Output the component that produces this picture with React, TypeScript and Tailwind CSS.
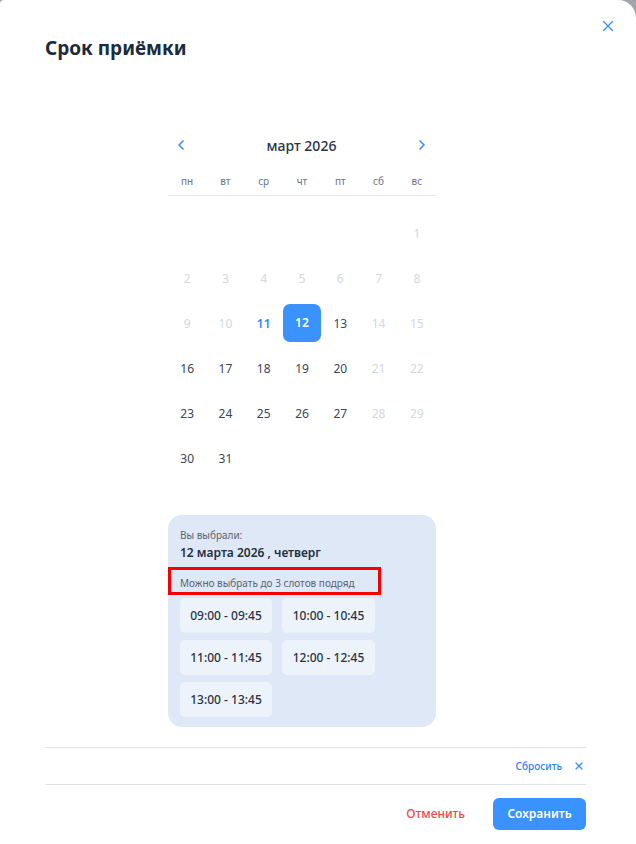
import React from 'react';
import { ChevronLeft, ChevronRight, X } from 'lucide-react';

const font = { fontFamily: '"Noto Sans", "Open Sans", sans-serif' };

const weekdays = ['пн', 'вт', 'ср', 'чт', 'пт', 'сб', 'вс'];

type Day = { n: number; state: 'off' | 'on' | 'today' | 'selected' } | null;

// march 2026 starts on sunday
const days: Day[] = [
  null, null, null, null, null, null, { n: 1, state: 'off' },
  { n: 2, state: 'off' }, { n: 3, state: 'off' }, { n: 4, state: 'off' }, { n: 5, state: 'off' }, { n: 6, state: 'off' }, { n: 7, state: 'off' }, { n: 8, state: 'off' },
  { n: 9, state: 'off' }, { n: 10, state: 'off' }, { n: 11, state: 'today' }, { n: 12, state: 'selected' }, { n: 13, state: 'on' }, { n: 14, state: 'off' }, { n: 15, state: 'off' },
  { n: 16, state: 'on' }, { n: 17, state: 'on' }, { n: 18, state: 'on' }, { n: 19, state: 'on' }, { n: 20, state: 'on' }, { n: 21, state: 'off' }, { n: 22, state: 'off' },
  { n: 23, state: 'on' }, { n: 24, state: 'on' }, { n: 25, state: 'on' }, { n: 26, state: 'on' }, { n: 27, state: 'on' }, { n: 28, state: 'off' }, { n: 29, state: 'off' },
  { n: 30, state: 'on' }, { n: 31, state: 'on' }, null, null, null, null, null,
];

const slots = ['09:00 - 09:45', '10:00 - 10:45', '11:00 - 11:45', '12:00 - 12:45', '13:00 - 13:45'];

function DayCell({ day }: { day: Day }) {
  if (!day) return <div className="h-[45px]" />;
  let cls = 'text-[#3a4556]';
  if (day.state === 'off') cls = 'text-[#d4d8de]';
  if (day.state === 'today') cls = 'text-[#2f86f6] font-semibold';
  return (
    <div className="h-[45px] flex items-center justify-center">
      {day.state === 'selected' ? (
        <div className="w-[38px] h-[38px] -mt-[2px] rounded-[7px] bg-[#3a92fd] text-white font-semibold flex items-center justify-center">
          {day.n}
        </div>
      ) : (
        <span className={cls}>{day.n}</span>
      )}
    </div>
  );
}

export default function App() {
  return (
    <div className="w-[636px] h-[844px] bg-[#a0a4ab] overflow-hidden" style={font}>
      <div className="w-full h-full bg-white rounded-tl-[4px] rounded-tr-[18px] flex flex-col pl-[45px] pr-[50px]">
        <div className="relative pt-[36px]">
          <h1 className="text-[19px] font-bold text-[#1c2a3d] leading-[24px]">Срок приёмки</h1>
          <button className="absolute right-[-31px] top-[17px] text-[#3a8ff7]">
            <X size={18} strokeWidth={1.8} />
          </button>
        </div>

        <div className="w-[268px] ml-[123px] mt-[72px]">
          <div className="flex items-center justify-between h-[26px]">
            <ChevronLeft size={16} strokeWidth={2.5} className="text-[#3a8ff7] ml-[5px]" />
            <span className="text-[14px] font-medium text-[#2a3444]">март 2026</span>
            <ChevronRight size={16} strokeWidth={2.5} className="text-[#3a8ff7] mr-[6px]" />
          </div>
          <div className="grid grid-cols-7 mt-[16px] pb-[7px] border-b border-[#e6e8eb]">
            {weekdays.map(w => (
              <div key={w} className="text-center text-[10px] text-[#6b7280] leading-[14px]">{w}</div>
            ))}
          </div>
          <div className="grid grid-cols-7 text-[12px] mt-[15px]">
            {days.map((d, i) => (
              <DayCell key={i} day={d} />
            ))}
          </div>
        </div>

        <div className="w-[268px] ml-[123px] mt-[34px] bg-[#dfe8f6] rounded-[14px] px-[12px] pt-[13px] pb-[10px]">
          <div className="text-[10px] text-[#5b6472] leading-[14px]">Вы выбрали:</div>
          <div className="text-[12px] font-semibold text-[#253041] leading-[16px] mt-[3px]">12 марта 2026 , четверг</div>
          <div className="-ml-[12px] mt-[6px] w-[213px] h-[28px] border-[3px] border-[#f50000] pl-[9px] pt-[6px] text-[10px] text-[#5b6472] leading-[14px]">
            Можно выбрать до 3 слотов подряд
          </div>
          <div className="grid grid-cols-[92px_93px] gap-x-[10px] gap-y-[7px] mt-[3px]">
            {slots.map(s => (
              <div key={s} className="h-[35px] rounded-[5px] bg-[#edf3fb] flex items-center justify-center text-[12px] font-medium text-[#2a3444]">
                {s}
              </div>
            ))}
          </div>
        </div>

        <div className="mt-[20px] border-t border-[#dfe3e8] h-[37px] flex items-center justify-end gap-[11px] pr-[1px]">
          <span className="text-[10px] text-[#2f7fe8] font-medium">Сбросить</span>
          <X size={12} strokeWidth={2.5} className="text-[#3a8ff7]" />
        </div>
        <div className="border-t border-[#dfe3e8] pt-[13px] flex items-center justify-end">
          <button className="text-[12px] font-medium text-[#f0474d] mr-[28px]">Отменить</button>
          <button className="w-[93px] h-[32px] rounded-[6px] bg-[#3a92fd] text-white text-[12px] font-semibold">Сохранить</button>
        </div>
      </div>
    </div>
  );
}
